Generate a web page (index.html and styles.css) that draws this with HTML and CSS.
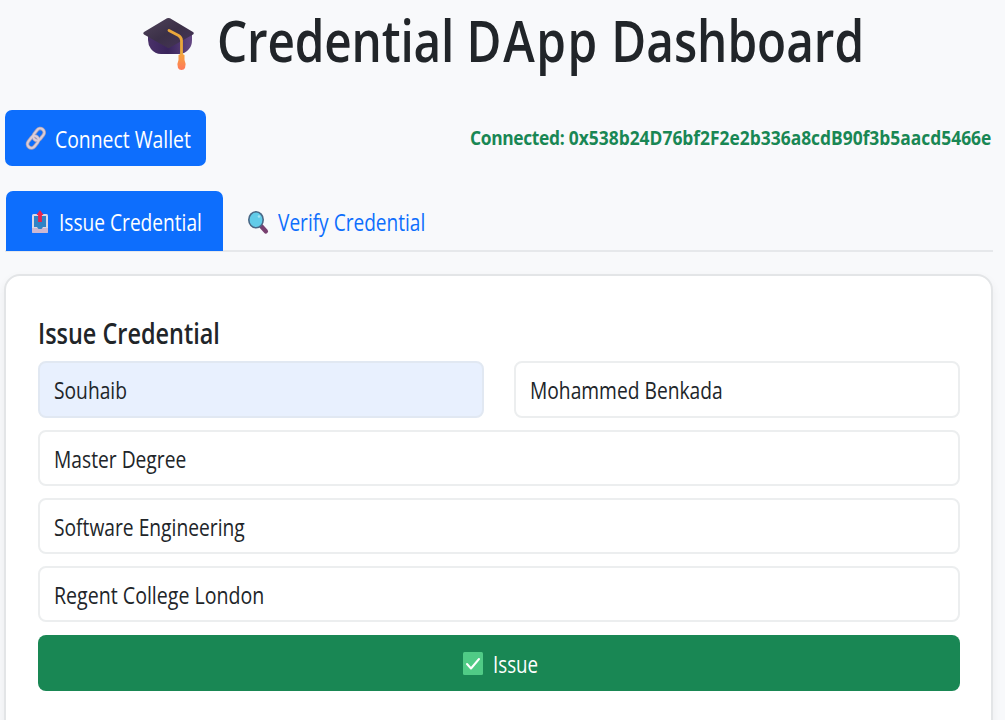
FILE: index.html
```html
<!DOCTYPE html>
<html lang="en">
<head>
<meta charset="utf-8">
<title>Credential DApp Dashboard</title>
<link rel="stylesheet" href="styles.css">
</head>
<body>
<main class="page">
  <h1 class="title">
    <svg class="cap" viewBox="0 0 54 56" aria-hidden="true">
      <defs>
        <linearGradient id="board" x1="0" y1="0" x2="1" y2="1"><stop offset="0" stop-color="#51445c"/><stop offset=".5" stop-color="#3b3047"/><stop offset="1" stop-color="#46345a"/></linearGradient>
        <linearGradient id="base" x1="0" y1="0" x2="1" y2="0"><stop offset="0" stop-color="#4a3169"/><stop offset=".45" stop-color="#39245b"/><stop offset="1" stop-color="#654884"/></linearGradient>
        <linearGradient id="tassel" x1="0" y1="0" x2="0" y2="1"><stop offset="0" stop-color="#f6a53c"/><stop offset="1" stop-color="#ff785b"/></linearGradient>
      </defs>
      <path d="M5 19h44v6q0 6-3 9-4 5-10 5H18q-6 0-10-5-3-4-3-9z" fill="url(#base)"/>
      <path d="M24 3.300q1.500-.7 3 0L50 17q1.500 1.200 0 2.500L27 32.500q-1.500 1-3 0L1 19.500q-1.500-1.200 0-2.500z" fill="url(#board)"/>
      <path d="M26 15.500 35.500 20.500q3 1.800 3 5V41" fill="none" stroke="#eaa73b" stroke-width="2.800" stroke-linecap="round"/>
      <path d="M35.500 40q3-2 6 0v5q2 4 .5 8-1 2-3.500 2t-3.500-2q-1.500-4 .5-8z" fill="url(#tassel)"/>
    </svg>
    <span class="txt title-text"><span class="w1">Credential</span> <span class="w2">DApp</span> Dashboard</span>
  </h1>
  <div class="wallet-row">
    <button class="connect">
      <svg class="link-icon" viewBox="0 0 22 26" fill="none" aria-hidden="true">
        <g stroke="#aaa0b3" stroke-width="3.500"><rect x="-4" y="-6.500" width="8" height="13" rx="4" transform="translate(13.700 9.500) rotate(38)"/><rect x="-4" y="-6.500" width="8" height="13" rx="4" transform="translate(8 17) rotate(38)"/></g>
        <g stroke="#dacddb" stroke-width="2"><rect x="-4" y="-6.500" width="8" height="13" rx="4" transform="translate(13.700 9.500) rotate(38)"/><rect x="-4" y="-6.500" width="8" height="13" rx="4" transform="translate(8 17) rotate(38)"/></g>
      </svg>
      <span class="txt connect-text">Connect Wallet</span>
    </button>
    <strong class="txt address"><span class="label">Connected:</span> 0x538b24D76bf2F2e2b336a8cdB90f3b5aacd5466e</strong>
  </div>
  <nav class="tabs">
    <a class="tab active">
      <svg class="out-icon" viewBox="0 0 18 24" aria-hidden="true">
        <rect x="1" y="4" width="16" height="19" rx="1.500" fill="#dcd7e5"/>
        <path d="M1 18h16v3.500q0 1.500-1.500 1.500h-13Q1 23 1 21.500z" fill="#cdb8d2"/>
        <path d="M3 6h12v11h-3l-1.500 2h-3L6 17H3z" fill="#2f83c6"/>
        <path d="M9 0 12.500 5h-1.600v7H7.100V5H5.500z" fill="#e8244f"/>
      </svg>
      <span class="txt issue-text">Issue Credential</span>
    </a>
    <a class="tab verify">
      <svg class="search-icon" viewBox="0 0 22 26" aria-hidden="true">
        <path d="m14.500 17.500 4.300 4.800" stroke="#78406f" stroke-width="4.500" stroke-linecap="round"/>
        <ellipse cx="9" cy="10.800" rx="7.200" ry="8" fill="#62cce9" stroke="#4a6886" stroke-width="1.600"/>
        <circle cx="12" cy="7.500" r="1.300" fill="#a5e5f4"/>
      </svg>
      <span class="txt verify-text">Verify Credential</span>
    </a>
  </nav>
  <section class="card">
    <h2 class="txt heading">Issue Credential</h2>
    <form class="form">
      <div class="field filled"><span class="txt f1">Souhaib</span></div>
      <div class="field"><span class="txt f2">Mohammed Benkada</span></div>
      <div class="field wide"><span class="txt f3">Master Degree</span></div>
      <div class="field wide"><span class="txt f4">Software Engineering</span></div>
      <div class="field wide"><span class="txt f5">Regent College London</span></div>
      <button type="button" class="submit wide">
        <svg class="check" viewBox="0 0 20 23" aria-hidden="true"><rect width="20" height="23" rx="1.500" fill="#50cb86"/><path d="m4 12 4 4.500 8-9.500" fill="none" stroke="#fff" stroke-width="2" stroke-linecap="round" stroke-linejoin="round"/></svg>
        <span class="txt submit-text">Issue</span>
      </button>
    </form>
  </section>
</main>
</body>
</html>
```
FILE: styles.css
```css
* { box-sizing: border-box; }
body { margin: 0; height: 720px; overflow: hidden; background: #f8f9fb; color: #212529; font-family: "Open Sans", "Noto Sans", sans-serif; font-size: 24px; }
h1, h2 { margin: 0; }
button { border: 0; font: inherit; color: #fff; }
svg { display: block; flex: none; }
.page { padding: 0 12px 0 5px; }
.txt { display: block; flex: none; white-space: nowrap; transform: scaleX(var(--sx)); transform-origin: left center; }
.title { display: flex; height: 110px; padding: 15px 0 0 138px; }
.cap { width: 54px; height: 56px; }
.title-text { --sx: .815; width: 643px; margin-left: 20px; height: 56px; line-height: 48px; font-size: 58.500px; font-weight: 600; }
.w1 { letter-spacing: -.2px; }
.w2 { letter-spacing: 2px; }
.wallet-row { display: flex; justify-content: space-between; align-items: center; height: 56px; }
.connect { display: flex; align-items: center; width: 201px; height: 56px; padding: 0 0 0 20px; border-radius: 7px; background: #0d6efd; }
.link-icon { width: 22px; height: 26px; margin-right: 8px; }
.connect-text { --sx: .807; width: 135px; }
.address { --sx: .87; width: 523px; margin-top: -1px; color: #198754; font-size: 20px; font-weight: 700; }
.label { letter-spacing: -.4px; }
.tabs { display: flex; height: 61px; margin-top: 25px; border-bottom: 2px solid #e6e8eb; }
.tab { display: flex; align-items: center; height: 60px; color: #0d6efd; padding-top: 1px; }
.active { width: 217px; margin-left: 1px; padding-left: 25px; border-radius: 7px 7px 0 0; background: #0d6efd; color: #fff; }
.out-icon { width: 18px; height: 24px; margin-right: 10px; }
.issue-text { --sx: .797; width: 142px; }
.verify { padding-left: 24px; }
.search-icon { width: 22px; height: 26px; margin-right: 9px; }
.verify-text { --sx: .795; width: 147px; }
.card { height: 480px; margin: 22px 0 0 -1px; padding: 39px 31px 0 32px; border: 2px solid #e3e5e7; border-radius: 16px; background: #fff; box-shadow: 0 4px 10px rgba(0, 0, 0, .06); }
.heading { --sx: .837; width: 181px; height: 46px; line-height: 36px; font-size: 28px; font-weight: 600; }
.form { display: grid; grid-template-columns: 446px 446px; column-gap: 30px; row-gap: 12px; }
.wide { grid-column: 1 / -1; }
.field { display: flex; align-items: center; height: 57px; padding-left: 14px; border: 2px solid #eceeef; border-radius: 8px; background: #fff; }
.field.wide { height: 56px; }
.filled { background: #e8f0fe; border-color: #e1e8f2; }
.f1, .f2, .f3, .f4 { --sx: .801; }
.f5 { --sx: .816; }
.submit { display: flex; align-items: center; height: 56px; margin-top: 1px; padding: 1px 0 0 425px; border-radius: 8px; background: #198754; }
.check { width: 20px; height: 23px; margin-right: 10px; }
.submit-text { --sx: .78; }
```
